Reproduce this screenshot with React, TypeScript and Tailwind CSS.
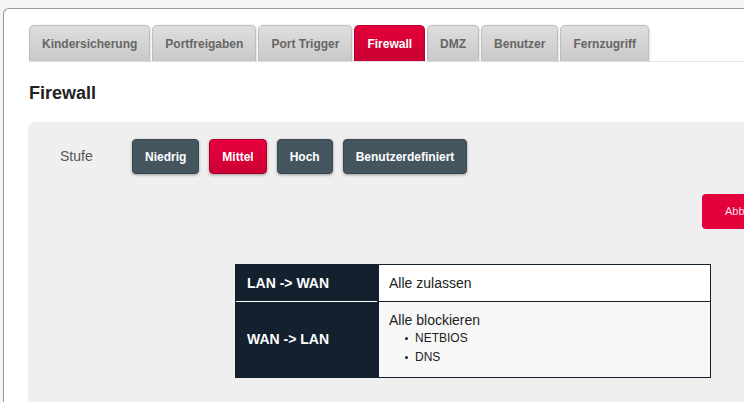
import type { ReactNode } from 'react';

const tabs = [
  'Kindersicherung',
  'Portfreigaben',
  'Port Trigger',
  'Firewall',
  'DMZ',
  'Benutzer',
  'Fernzugriff',
];

const levels = ['Niedrig', 'Mittel', 'Hoch', 'Benutzerdefiniert'];

function LevelButton({ label, active }: { label: string; active: boolean }) {
  return (
    <button
      className={
        'h-[35px] rounded-[4px] px-[12px] text-[12px] font-bold text-white shadow-[0_1px_3px_rgba(0,0,0,0.35)] ' +
        (active
          ? 'border border-[#a8002c] bg-gradient-to-b from-[#e8003d] to-[#cc0033]'
          : 'border border-[#3a4750] bg-[#455560]')
      }
    >
      {label}
    </button>
  );
}

function Row({ head, children, alt }: { head: string; children: ReactNode; alt?: boolean }) {
  return (
    <div className="flex">
      <div className="flex w-[143px] shrink-0 items-center bg-[#13212f] pl-[11px] text-[14px] font-bold text-white">
        {head}
      </div>
      <div className={'flex-1 px-[10px] text-[14px] text-[#222] ' + (alt ? 'bg-[#f7f7f7]' : 'bg-white')}>
        {children}
      </div>
    </div>
  );
}

function Bullet({ children }: { children: ReactNode }) {
  return (
    <li className="flex items-center leading-[19px]">
      <span className="ml-[16px] mr-[7px] h-[3px] w-[3px] rounded-full bg-[#222]" />
      {children}
    </li>
  );
}

export default function App() {
  return (
    <div
      className="h-[402px] w-[744px] overflow-hidden bg-[#f4f4f4] pl-[3px] pt-[8px]"
      style={{ fontFamily: '"Liberation Sans", Arial, sans-serif' }}
    >
      <div className="h-full rounded-tl-[6px] border-l border-t border-[#9a9a9a] bg-white">
        {/* Tabs */}
        <div className="ml-[25px] mt-[16px] flex gap-[2px] border-b border-[#e4e4e4]">
          {tabs.map((t) => (
            <div
              key={t}
              className={
                'flex h-[36px] items-center rounded-t-[5px] border border-b-0 px-[12px] text-[12px] font-bold ' +
                (t === 'Firewall'
                  ? 'border-[#b8002f] bg-gradient-to-b from-[#e4003b] to-[#c90032] text-white'
                  : 'border-[#bdbdbd] bg-gradient-to-b from-[#dedede] to-[#c9c9c9] text-[#666] shadow-[1px_0_2px_rgba(0,0,0,0.12)]')
              }
            >
              {t}
            </div>
          ))}
        </div>

        <h1 className="ml-[25px] mt-[20px] text-[18px] font-bold leading-[22px] text-[#222]">Firewall</h1>

        {/* Panel */}
        <div className="ml-[24px] mt-[18px] h-[300px] rounded-tl-[7px] bg-[#efefef] pt-[17px]">
          <div className="flex items-center">
            <span className="ml-[32px] w-[72px] text-[14px] text-[#555]">Stufe</span>
            <div className="flex gap-[10px]">
              {levels.map((l) => (
                <LevelButton key={l} label={l} active={l === 'Mittel'} />
              ))}
            </div>
          </div>

          <div className="mt-[20px] flex justify-end">
            <button className="-mr-[78px] h-[35px] w-[120px] rounded-[4px] bg-[#e4003a] pl-[23px] text-left text-[11px] text-[#fde]">
              Abbrechen
            </button>
          </div>

          <div className="ml-[207px] mt-[35px] w-[476px] border border-[#13212f]">
            <Row head="LAN -> WAN">
              <div className="flex h-[36px] items-center">Alle zulassen</div>
            </Row>
            <div className="h-[1px] bg-[#13212f]">
              <div className="h-[1px] w-[141px] bg-white" />
            </div>
            <Row head="WAN -> LAN" alt>
              <div className="pb-[10px] pt-[9px]">
                <div className="leading-[18px]">Alle blockieren</div>
                <ul className="text-[12px]">
                  <Bullet>NETBIOS</Bullet>
                  <Bullet>DNS</Bullet>
                </ul>
              </div>
            </Row>
          </div>
        </div>
      </div>
    </div>
  );
}
